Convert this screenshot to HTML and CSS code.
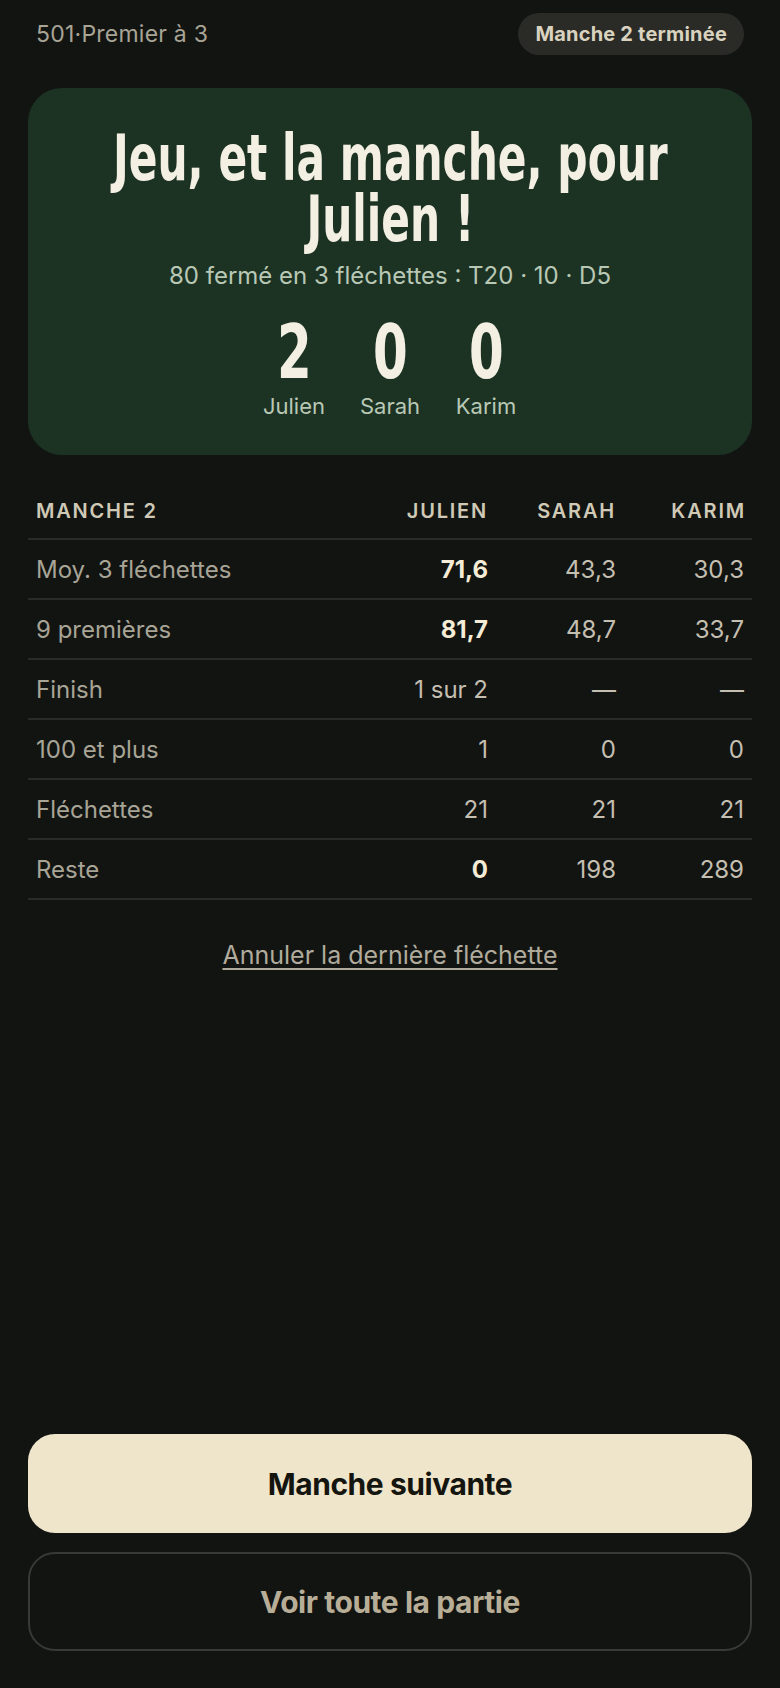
FILE: index.html
```html
<!DOCTYPE html>
<html lang="fr">
<head>
    <meta charset="UTF-8">
    <meta name="viewport" content="width=device-width, initial-scale=1.0">
    <title>Manche 2 terminée</title>
    <link rel="stylesheet" href="styles.css">
</head>
<body>
    <div class="app">
        <header class="top">
            <span class="format">501·Premier à 3</span>
            <span class="pill">Manche 2 terminée</span>
        </header>

        <section class="result">
            <h1 class="title"><span>Jeu, et la manche, pour<br>Julien !</span></h1>
            <p class="checkout">80 fermé en 3 fléchettes : T20 · 10 · D5</p>
            <div class="scores">
                <div class="score"><span class="legs">2</span><span class="name">Julien</span></div>
                <div class="score"><span class="legs">0</span><span class="name">Sarah</span></div>
                <div class="score"><span class="legs">0</span><span class="name">Karim</span></div>
            </div>
        </section>

        <table class="stats">
            <thead>
                <tr><th>Manche 2</th><th>Julien</th><th>Sarah</th><th>Karim</th></tr>
            </thead>
            <tbody>
                <tr><td>Moy. 3 fléchettes</td><td class="best">71,6</td><td>43,3</td><td>30,3</td></tr>
                <tr><td>9 premières</td><td class="best">81,7</td><td>48,7</td><td>33,7</td></tr>
                <tr><td>Finish</td><td>1 sur 2</td><td>—</td><td>—</td></tr>
                <tr><td>100 et plus</td><td>1</td><td>0</td><td>0</td></tr>
                <tr><td>Fléchettes</td><td>21</td><td>21</td><td>21</td></tr>
                <tr><td>Reste</td><td class="best">0</td><td>198</td><td>289</td></tr>
            </tbody>
        </table>

        <a class="undo" href="#">Annuler la dernière fléchette</a>

        <footer class="actions">
            <button class="btn primary">Manche suivante</button>
            <button class="btn ghost">Voir toute la partie</button>
        </footer>
    </div>
</body>
</html>
```

FILE: styles.css
```css
:root {
    --fond: #121412;
    --carte: #1c3324;
    --creme: #efe5cb;
    --texte: #c4bfb1;
    --discret: #a8a496;
    --vert-clair: #b9c8b5;
    --ligne: #2a2b28;
    font-family: Inter, "Noto Sans", sans-serif;
}

* {
    box-sizing: border-box;
}

body {
    margin: 0;
    background-color: var(--fond);
    color: var(--texte);
}

.app {
    display: flex;
    flex-direction: column;
    min-height: 100vh;
    padding: 13px 28px 37px;
}

.top {
    display: flex;
    justify-content: space-between;
    align-items: center;
    height: 42px;
    padding: 0 8px;
}
.format {
    font-size: 23px;
    letter-spacing: 0.01em;
    color: var(--discret);
}
.pill {
    background-color: #2a2b27;
    color: #d9d2bf;
    font-weight: 700;
    font-size: 20px;
    letter-spacing: 0.01em;
    padding: 9px 17px;
    border-radius: 21px;
}

.result {
    margin-top: 33px;
    background-color: var(--carte);
    border-radius: 34px;
    padding: 40px 20px 35px;
    text-align: center;
}
.title {
    display: flex;
    justify-content: center;
    margin: 0;
    font-family: "DejaVu Sans Condensed", "DejaVu Sans", sans-serif;
    font-stretch: condensed;
    font-weight: 700;
    font-size: 64px;
    line-height: 61px;
    color: #f3efe3;
}
.title span {
    flex-shrink: 0;
    white-space: nowrap;
    transform: scaleX(0.735);
}
.checkout {
    margin: 11px 0 0;
    font-size: 24px;
    line-height: 30px;
    color: var(--vert-clair);
}
.scores {
    display: flex;
    justify-content: center;
    margin-top: 25px;
}
.score {
    display: flex;
    flex-direction: column;
    align-items: center;
    width: 96px;
}
.legs {
    font-family: "DejaVu Sans Condensed", "DejaVu Sans", sans-serif;
    font-stretch: condensed;
    font-weight: 700;
    font-size: 75px;
    line-height: 72px;
    color: #f3efe3;
    transform: scaleX(0.74);
}
.name {
    font-size: 22px;
    line-height: 28px;
    margin-top: 4px;
    color: var(--vert-clair);
}

.stats {
    width: 100%;
    border-collapse: collapse;
    margin-top: 32px;
    font-size: 24px;
}
.stats th {
    text-align: right;
    text-transform: uppercase;
    font-size: 20px;
    font-weight: 600;
    letter-spacing: 0.09em;
    color: #cfc9b6;
    height: 52px;
    padding: 0 8px 4px;
    vertical-align: middle;
}
.stats th:first-child,
.stats td:first-child {
    text-align: left;
}
.stats th:nth-child(n+2),
.stats td:nth-child(n+2) {
    width: 128px;
}
.stats th:last-child {
    padding-right: 6px;
}
.stats thead tr {
    border-bottom: 2px solid var(--ligne);
}
.stats td {
    text-align: right;
    height: 60px;
    padding: 0 8px;
    border-bottom: 2px solid var(--ligne);
    color: var(--texte);
}
.stats td:first-child {
    color: var(--discret);
}
.stats td.best {
    font-weight: 700;
    color: #f4ecd6;
}

.undo {
    align-self: center;
    margin-top: 40px;
    font-size: 25px;
    line-height: 30px;
    color: #b0ab9c;
    text-underline-offset: 4px;
}

.actions {
    margin-top: auto;
    display: flex;
    flex-direction: column;
    gap: 19px;
}
.btn {
    height: 99px;
    border-radius: 27px;
    font-family: Inter, "Noto Sans", sans-serif;
    font-size: 30px;
    font-weight: 700;
    letter-spacing: -0.015em;
}
.primary {
    background-color: var(--creme);
    color: #15150f;
    border: none;
}
.ghost {
    background-color: transparent;
    color: #b8ae97;
    border: 2px solid #393a36;
}
```
